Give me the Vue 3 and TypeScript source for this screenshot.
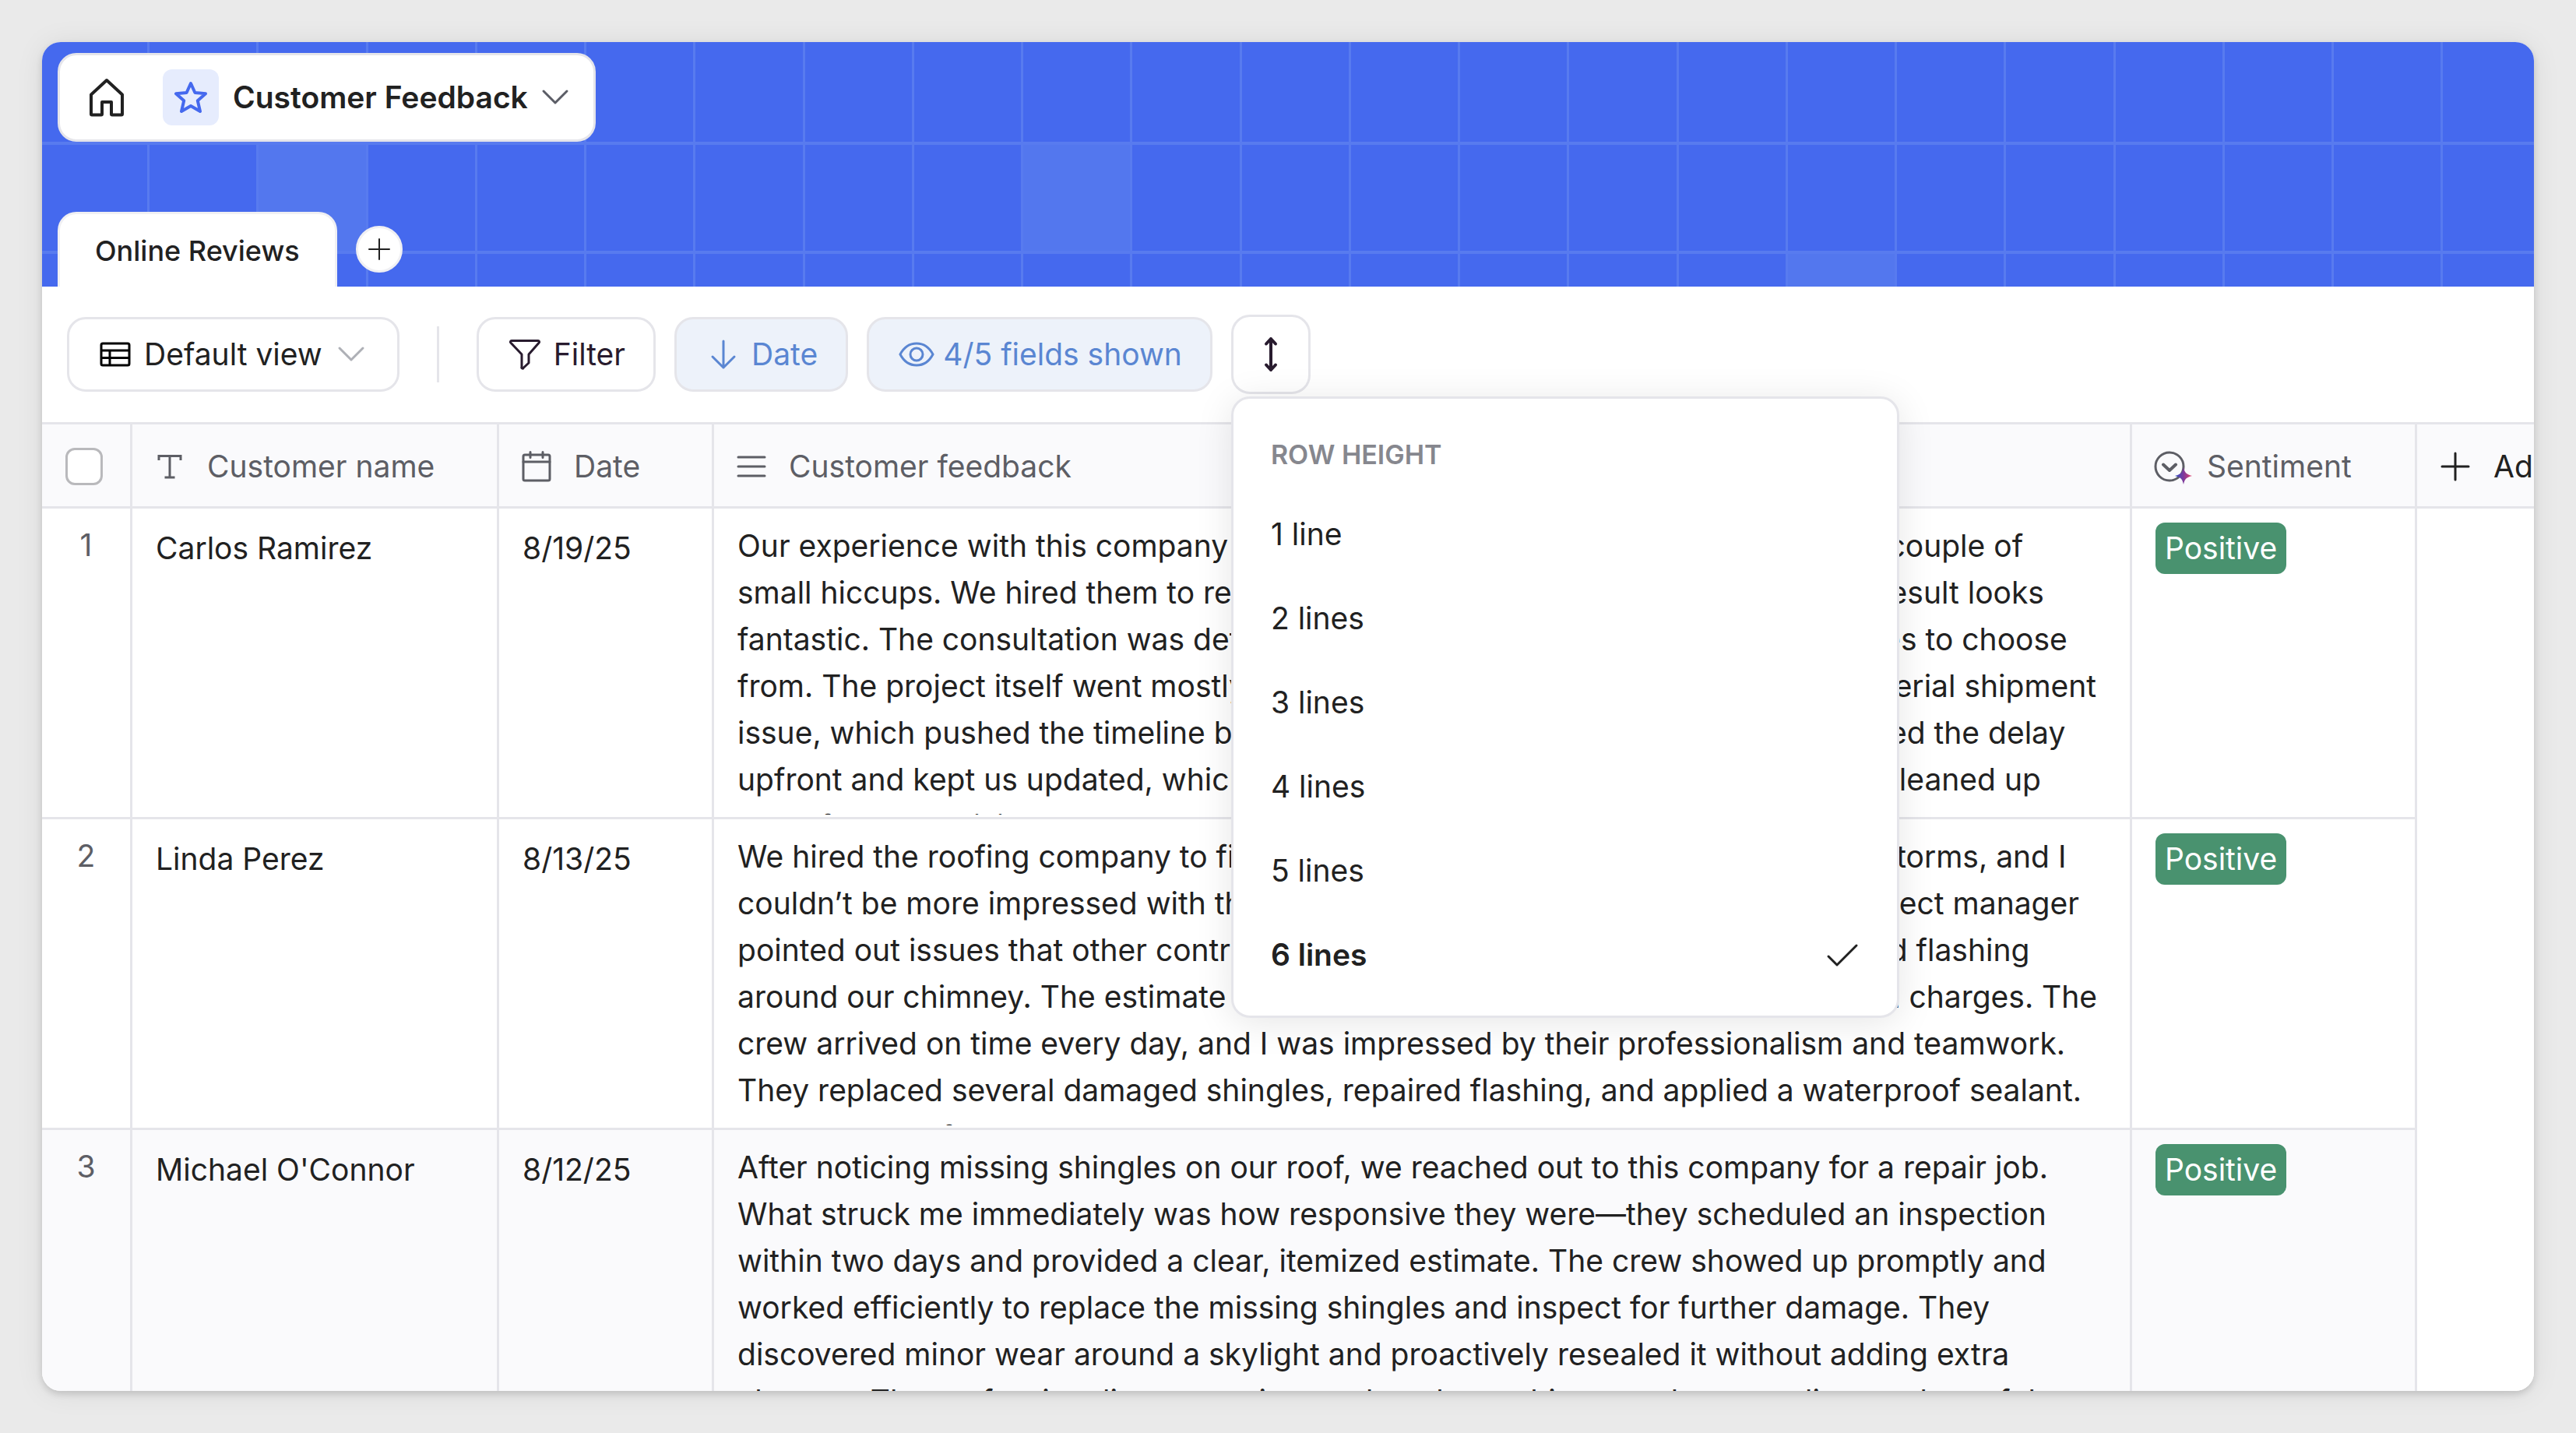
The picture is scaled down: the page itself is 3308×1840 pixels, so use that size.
<script setup lang="ts">
import { ref } from 'vue'

interface Review {
  id: number
  name: string
  date: string
  feedback: string
  sentiment: string
}

const cell = 140.26
const columns = Array.from({ length: 22 }, (_, i) => Math.round(135 + i * cell))
const rowLines = [128, 268]
const tiles = [
  { x: 276, y: 130, h: 140 },
  { x: 1257, y: 130, h: 140 },
  { x: 2239, y: 270, h: 60 },
]

const heights = ['1 line', '2 lines', '3 lines', '4 lines', '5 lines', '6 lines']
const selected = ref('6 lines')

const reviews: Review[] = [
  {
    id: 1,
    name: 'Carlos Ramirez',
    date: '8/19/25',
    feedback: `Our experience with this company was mostly excellent overall, even with just a couple of
small hiccups. We hired them to replace the damaged roof and gutters, and the result looks
fantastic. The consultation was detailed, and they offered plenty of pretty shingles to choose
from. The project itself went mostly smoothly, though there was a misplaced material shipment
issue, which pushed the timeline back by multiple days, and they quickly explained the delay
upfront and kept us updated, which we truly appreciated. They then thoroughly cleaned up
well after each visit.`,
    sentiment: 'Positive',
  },
  {
    id: 2,
    name: 'Linda Perez',
    date: '8/13/25',
    feedback: `We hired the roofing company to fix several roof leaks after the severe summer storms, and I
couldn’t be more impressed with the great quality of their work. The talented project manager
pointed out issues that other contractors skipped, including some badly damaged flashing
around our chimney. The estimate was quite precise and detailed, with no hidden charges. The
crew arrived on time every day, and I was impressed by their professionalism and teamwork.
They replaced several damaged shingles, repaired flashing, and applied a waterproof sealant.
The cleanup after the work was great.`,
    sentiment: 'Positive',
  },
  {
    id: 3,
    name: "Michael O'Connor",
    date: '8/12/25',
    feedback: `After noticing missing shingles on our roof, we reached out to this company for a repair job.
What struck me immediately was how responsive they were—they scheduled an inspection
within two days and provided a clear, itemized estimate. The crew showed up promptly and
worked efficiently to replace the missing shingles and inspect for further damage. They
discovered minor wear around a skylight and proactively resealed it without adding extra
charges. The professionalism, attention, and workmanship stayed outstanding, and careful`,
    sentiment: 'Positive',
  },
]
</script>

<template>
  <div class="page">
    <main class="window">
      <header class="banner">
        <svg class="pattern" aria-hidden="true">
          <rect v-for="t in tiles" :key="t.x" :x="t.x" :y="t.y" width="142" :height="t.h" fill="#5377ee" />
          <rect v-for="x in columns" :key="'c' + x" :x="x" y="0" width="3" height="100%" fill="#587bef" />
          <rect v-for="y in rowLines" :key="'r' + y" x="0" :y="y" width="100%" height="4" fill="#587bef" />
        </svg>
        <div class="brand">
          <button class="plain" type="button" aria-label="Home">
            <svg width="48" height="52" viewBox="0 0 48 52" fill="none" stroke="#212121" stroke-width="4" stroke-linejoin="round">
              <path d="M4 22.500 24 4l20 18.500V47.500a1 1 0 0 1-1 1H31a1 1 0 0 1-1-1V32H18v15.500a1 1 0 0 1-1 1H5a1 1 0 0 1-1-1z" />
            </svg>
          </button>
          <span class="star">
            <svg width="44" height="44" viewBox="0 0 44 44" fill="none" stroke="#4569ee" stroke-width="4" stroke-linejoin="round">
              <path d="M22 4l5.400 12L41 17.300 30.800 26.300 34 40 22 33 10 40l3.200-13.700L3 17.300 16.600 16z" />
            </svg>
          </span>
          <button class="plain title" type="button">
            <span>Customer Feedback</span>
            <svg width="34" height="20" viewBox="0 0 34 20" fill="none" stroke="#5b5d66" stroke-width="3" stroke-linecap="round" stroke-linejoin="round">
              <path d="M2 2l15 15L32 2" />
            </svg>
          </button>
        </div>
        <nav class="tabs">
          <a class="tab" href="#reviews">Online Reviews</a>
          <button class="add-tab" type="button" aria-label="Add tab">
            <svg width="28" height="28" viewBox="0 0 28 28" stroke="#212121" stroke-width="2" stroke-linecap="round">
              <path d="M14 1v26M1 14h26" />
            </svg>
          </button>
        </nav>
      </header>

      <div class="toolbar">
        <button class="tool" type="button">
          <svg width="40" height="32" viewBox="0 0 40 32" fill="none" stroke="#000" stroke-width="3">
            <rect x="2" y="2" width="36" height="28" rx="2" />
            <path d="M2 11h36M2 20.500h36M13 11v19" />
          </svg>
          <span>Default view</span>
          <svg class="caret" width="34" height="20" viewBox="0 0 34 20" fill="none" stroke="#aeb0b6" stroke-width="3" stroke-linecap="round" stroke-linejoin="round">
            <path d="M2 2l15 15L32 2" />
          </svg>
        </button>
        <span class="divider"></span>
        <button class="tool dark" type="button">
          <svg width="40" height="40" viewBox="0 0 40 40" fill="none" stroke="#281b2e" stroke-width="3" stroke-linejoin="round">
            <path d="M3 2.500h34a1.500 1.500 0 0 1 1.200 2.500L25 20v11L18 37.500a1 1 0 0 1-2-1V20L1.800 5A1.500 1.500 0 0 1 3 2.500z" />
          </svg>
          <span>Filter</span>
        </button>
        <button class="tool active" type="button">
          <svg width="40" height="40" viewBox="0 0 40 40" fill="none" stroke="#5a86d2" stroke-width="3" stroke-linecap="round" stroke-linejoin="round">
            <path d="M21 3v34M7 23l14 14 14-14" />
          </svg>
          <span>Date</span>
        </button>
        <button class="tool active fields" type="button">
          <svg width="44" height="34" viewBox="1 0 44 34" fill="none" stroke="#5a86d2" stroke-width="3">
            <path d="M2 17C7 7.500 14 3 23 3s16 4.500 21 14c-5 9.500-12 14-21 14S7 26.500 2 17z" />
            <circle cx="23" cy="17" r="8" />
          </svg>
          <span>4/5 fields shown</span>
        </button>
        <div class="height-picker">
          <button class="height-button" type="button" aria-label="Row height">
            <svg width="20" height="46" viewBox="0 0 20 46" fill="none" stroke="#281b2e" stroke-width="4" stroke-linecap="round" stroke-linejoin="round">
              <path d="M10 3v40M4 9.500 10 3l6 6.500M4 36.500 10 43l6-6.500" />
            </svg>
          </button>
          <div class="menu" role="menu" aria-label="Row height">
            <p class="menu-title">ROW HEIGHT</p>
            <button
              v-for="h in heights"
              :key="h"
              class="option"
              :class="{ chosen: h === selected }"
              type="button"
              role="menuitemradio"
              :aria-checked="h === selected"
              @click="selected = h"
            >
              <span>{{ h }}</span>
              <svg v-if="h === selected" width="40" height="32" viewBox="0 0 40 32" fill="none" stroke="#212121" stroke-width="3" stroke-linecap="round" stroke-linejoin="round">
                <path d="M2 18l11 11L38 4" />
              </svg>
            </button>
          </div>
        </div>
      </div>

      <table id="reviews" class="grid">
        <colgroup>
          <col class="w-index" /><col class="w-name" /><col class="w-date" /><col /><col class="w-sentiment" /><col class="w-add" />
        </colgroup>
        <thead>
          <tr>
            <th class="index"><input class="check" type="checkbox" aria-label="Select all rows" /></th>
            <th>
              <div class="head">
                <svg width="36" height="40" viewBox="0 0 36 40" fill="none" stroke="#5d5e65" stroke-width="3" stroke-linecap="square">
                  <path d="M4 10.500V6.500h28v4M18 6.500v27M13 34h10" />
                </svg>
                <span>Customer name</span>
              </div>
            </th>
            <th>
              <div class="head">
                <svg width="36" height="40" viewBox="0 0 36 40" fill="none" stroke="#5d5e65" stroke-width="3" stroke-linecap="round">
                  <rect x="1" y="5" width="34" height="33" rx="2" />
                  <path d="M1 14h34M10 1.500v7M26 1.500v7" />
                </svg>
                <span>Date</span>
              </div>
            </th>
            <th>
              <div class="head">
                <svg width="36" height="40" viewBox="1 0 36 40" stroke="#5d5e65" stroke-width="3" stroke-linecap="round">
                  <path d="M2 8h34M2 20h34M2 32h34" />
                </svg>
                <span>Customer feedback</span>
              </div>
            </th>
            <th>
              <div class="head close">
                <svg width="50" height="46" viewBox="2 0 50 46" fill="none">
                  <defs>
                    <linearGradient id="spark" x1="0" x2="1" y1="0" y2="0">
                      <stop offset="0" stop-color="#2d4fc4" />
                      <stop offset=".5" stop-color="#7d3a9c" />
                      <stop offset="1" stop-color="#e8416a" />
                    </linearGradient>
                  </defs>
                  <circle cx="20" cy="23" r="18" stroke="#5d5e65" stroke-width="3" />
                  <path d="M12 20.500l8 7.500 8-7.500" stroke="#5d5e65" stroke-width="4" stroke-linecap="round" stroke-linejoin="round" />
                  <path d="M38 24c1.500 6.500 3 9 11 11-8 2-9.500 4.500-11 11-1.500-6.500-3-9-11-11 8-2 9.500-4.500 11-11z" fill="url(#spark)" />
                </svg>
                <span>Sentiment</span>
              </div>
            </th>
            <th class="add">
              <button class="plain add-field" type="button">
                <svg width="38" height="38" viewBox="0 0 38 38" stroke="#212121" stroke-width="3" stroke-linecap="round">
                  <path d="M19 2v34M2 19h34" />
                </svg>
                <span>Add</span>
              </button>
            </th>
          </tr>
        </thead>
        <tbody>
          <tr v-for="r in reviews" :key="r.id" :class="{ hovered: r.id === 3 }">
            <td class="number">{{ r.id }}</td>
            <td class="text">{{ r.name }}</td>
            <td class="text">{{ r.date }}</td>
            <td class="long"><div class="feedback">{{ r.feedback }}</div></td>
            <td class="tag-cell"><span class="tag">{{ r.sentiment }}</span></td>
            <td class="blank"></td>
          </tr>
        </tbody>
      </table>
    </main>
  </div>
</template>

<style>
body {
  background: #eaeaea;
}
</style>

<style scoped>
.page {
  display: flex;
  box-sizing: border-box;
  height: 100vh;
  padding: 54px;
  color: #212121;
  font-family: Inter, 'Liberation Sans', sans-serif;
  font-size: 39px;
  line-height: 60px;
}
.page *,
.page *::before {
  box-sizing: border-box;
}
button {
  font: inherit;
  color: inherit;
  margin: 0;
  cursor: pointer;
}
svg {
  display: block;
  flex: none;
  overflow: visible;
}
.plain {
  display: flex;
  align-items: center;
  padding: 0;
  border: 0;
  background: none;
}
.window {
  flex: 1;
  min-width: 0;
  overflow: hidden;
  border-radius: 24px;
  background: #fff;
  box-shadow: 0 4px 8px rgba(0, 0, 0, 0.14), 0 2px 36px rgba(0, 0, 0, 0.08);
}
.banner {
  position: relative;
  display: flex;
  flex-direction: column;
  align-items: flex-start;
  gap: 90px;
  padding: 14px 20px 0;
  background: #4569ee;
}
.pattern {
  position: absolute;
  inset: 0;
  width: 100%;
  height: 100%;
  overflow: hidden;
}
.brand {
  position: relative;
  display: flex;
  align-items: center;
  height: 114px;
  padding: 0 32px 0 36px;
  border: 3px solid #e5e5ea;
  border-radius: 24px;
  background: #fff;
}
.star {
  display: flex;
  align-items: center;
  justify-content: center;
  width: 72px;
  height: 72px;
  margin: 0 18px 0 48px;
  border-radius: 12px;
  background: #e6ecfd;
}
.title {
  gap: 18px;
  font-weight: 600;
}
.tabs {
  position: relative;
  display: flex;
  align-items: center;
  gap: 24px;
}
.tab {
  display: flex;
  align-items: center;
  height: 96px;
  padding: 0 45px;
  border: 3px solid #f0f0f3;
  border-bottom: 0;
  border-radius: 24px 24px 0 0;
  background: #fff;
  color: #212121;
  font-size: 36px;
  font-weight: 500;
  text-decoration: none;
}
.add-tab {
  display: flex;
  align-items: center;
  justify-content: center;
  width: 60px;
  height: 60px;
  padding: 0;
  border: 3px solid #f0f0f3;
  border-radius: 50%;
  background: #fff;
}
.toolbar {
  display: flex;
  align-items: center;
  gap: 24px;
  padding: 36px 32px;
}
.tool {
  display: flex;
  align-items: center;
  gap: 17px;
  height: 96px;
  padding: 0 36px 0 39px;
  border: 3px solid #e5e5ea;
  border-radius: 24px;
  background: #fff;
  white-space: nowrap;
}
.caret {
  margin: 0 6px 0 3px;
}
.dark {
  color: #281b2e;
}
.active {
  background: #edf2fa;
  color: #5a86d2;
}
.fields {
  gap: 12px;
}
.divider {
  width: 3px;
  height: 72px;
  margin: 0 24px;
  background: #e5e5ea;
}
.height-picker {
  position: relative;
}
.height-button {
  display: flex;
  align-items: center;
  justify-content: center;
  width: 102px;
  height: 102px;
  padding: 0;
  border: 3px solid #e5e5ea;
  border-radius: 24px;
  background: #fff;
}
.menu {
  position: absolute;
  z-index: 2;
  top: 105px;
  left: 0;
  width: 858px;
  padding: 24px 0;
  border: 3px solid #e5e5ea;
  border-radius: 24px;
  background: #fff;
  box-shadow: 0 6px 48px rgba(0, 0, 0, 0.1);
}
.menu-title {
  margin: 0;
  padding: 0 48px;
  color: #86878e;
  font-size: 34px;
  font-weight: 600;
  line-height: 96px;
}
.option {
  display: flex;
  align-items: center;
  justify-content: space-between;
  width: 100%;
  height: 108px;
  padding: 0 50px 0 48px;
  border: 0;
  background: none;
  text-align: left;
}
.chosen {
  font-weight: 600;
}
.grid {
  width: 100%;
  table-layout: fixed;
  border-collapse: separate;
  border-spacing: 0;
}
.w-index {
  width: 116px;
}
.w-name {
  width: 471px;
}
.w-date {
  width: 276px;
}
.w-sentiment {
  width: 366px;
}
.w-add {
  width: 150px;
}
th {
  height: 111px;
  padding: 2px 0 0 30px;
  border-top: 3px solid #e5e5ea;
  border-right: 3px solid #e5e5ea;
  border-bottom: 3px solid #e5e5ea;
  background: #fafafc;
  color: #5d5e65;
  font-weight: 400;
  text-align: left;
}
.check {
  display: block;
  appearance: none;
  width: 48px;
  height: 48px;
  margin: 0;
  border: 3px solid #b9b9bc;
  border-radius: 12px;
  background: #fff;
}
.head {
  display: flex;
  align-items: center;
  gap: 30px;
  white-space: nowrap;
}
.close {
  gap: 16px;
}
.add {
  border-right: 0;
  overflow: hidden;
}
.add-field {
  gap: 30px;
  color: #212121;
}
td {
  height: 399px;
  padding: 0;
  border-right: 3px solid #e5e5ea;
  border-bottom: 3px solid #e5e5ea;
  vertical-align: top;
}
.number {
  padding-top: 17px;
  color: #5d5e65;
  text-align: center;
}
.text {
  padding: 21px 0 0 30px;
}
.long {
  padding-left: 30px;
}
.feedback {
  height: 393px;
  padding-top: 18px;
  overflow: hidden;
  white-space: pre;
}
.tag-cell {
  padding: 18px 0 0 30px;
}
.tag {
  display: block;
  width: fit-content;
  padding: 3px 12px;
  border-radius: 12px;
  background: #49926f;
  color: #fff;
}
.hovered td {
  background: #fafafc;
}
td.blank {
  border: 0;
  background: #fff;
}
</style>
